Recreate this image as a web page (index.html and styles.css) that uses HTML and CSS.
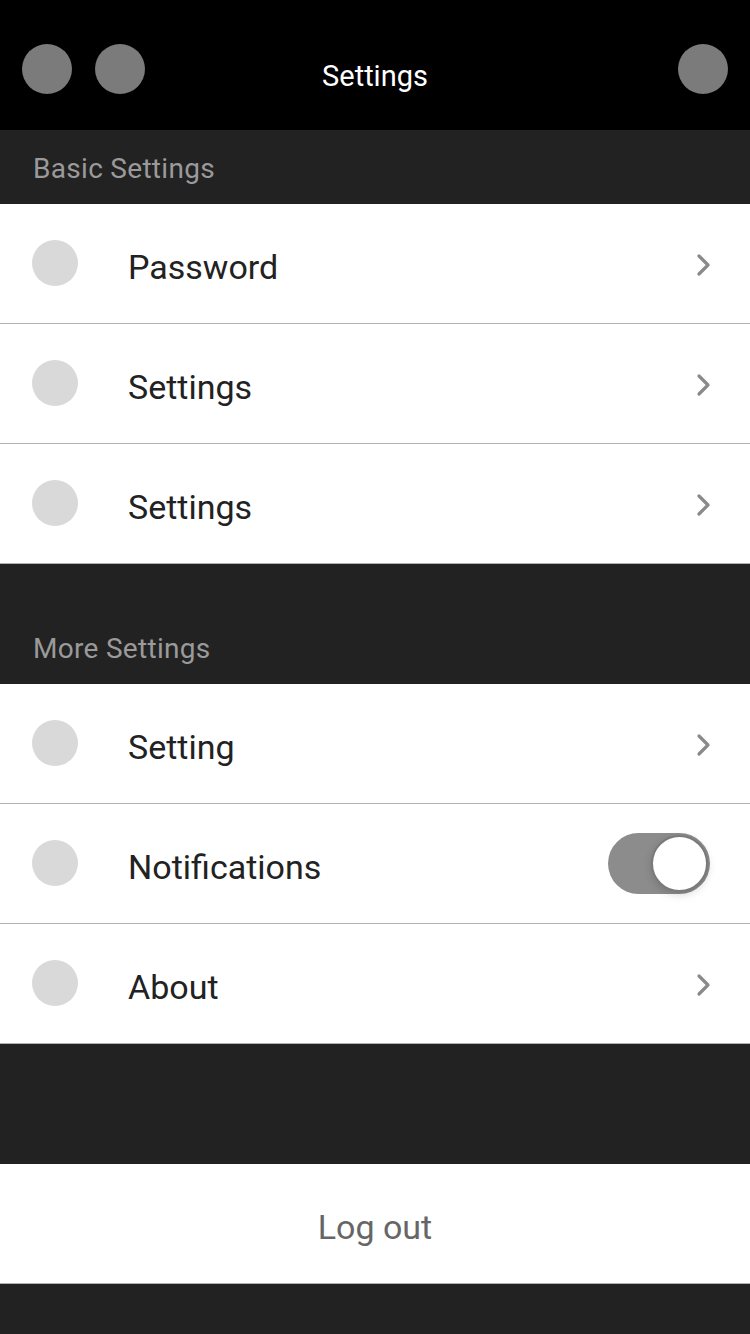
FILE: index.html
```html
<!DOCTYPE html>
<html>
<head>
<meta charset="utf-8">
<link rel="stylesheet" href="styles.css">
</head>
<body>
<div class="screen">
  <header class="topbar">
    <div class="topbar-left">
      <span class="nav-dot"></span>
      <span class="nav-dot"></span>
    </div>
    <div class="topbar-title">Settings</div>
    <div class="topbar-right">
      <span class="nav-dot"></span>
    </div>
  </header>

  <div class="section-head short">Basic Settings</div>
  <ul class="list">
    <li class="row"><span class="row-icon"></span><span class="row-label">Password</span><svg class="chev" viewBox="0 0 16 24"><path d="M3 3 L12 12 L3 21" /></svg></li>
    <li class="row"><span class="row-icon"></span><span class="row-label">Settings</span><svg class="chev" viewBox="0 0 16 24"><path d="M3 3 L12 12 L3 21" /></svg></li>
    <li class="row"><span class="row-icon"></span><span class="row-label">Settings</span><svg class="chev" viewBox="0 0 16 24"><path d="M3 3 L12 12 L3 21" /></svg></li>
  </ul>

  <div class="section-head tall">More Settings</div>
  <ul class="list">
    <li class="row"><span class="row-icon"></span><span class="row-label">Setting</span><svg class="chev" viewBox="0 0 16 24"><path d="M3 3 L12 12 L3 21" /></svg></li>
    <li class="row"><span class="row-icon"></span><span class="row-label">Notifications</span><span class="toggle"><span class="knob"></span></span></li>
    <li class="row"><span class="row-icon"></span><span class="row-label">About</span><svg class="chev" viewBox="0 0 16 24"><path d="M3 3 L12 12 L3 21" /></svg></li>
  </ul>

  <div class="spacer"></div>
  <div class="logout">Log out</div>
  <div class="bottom"></div>
</div>
</body>
</html>
```

FILE: styles.css
```css
* { box-sizing: border-box; }
html, body {
  margin: 0;
  padding: 0;
  background: #222222;
}
body {
  font-family: Roboto, "Liberation Sans", sans-serif;
}
.screen {
  width: 750px;
  height: 1334px;
  display: flex;
  flex-direction: column;
  background: #222222;
  overflow: hidden;
}
.topbar {
  height: 130px;
  background: #000000;
  display: flex;
  align-items: center;
  justify-content: space-between;
  padding: 0 22px 0 22px;
  position: relative;
}
.topbar-left, .topbar-right {
  display: flex;
  gap: 23px;
  margin-top: 8px;
}
.nav-dot {
  width: 50px;
  height: 50px;
  border-radius: 50%;
  background: #7b7b7b;
  display: block;
}
.topbar-title {
  position: absolute;
  left: 0;
  right: 0;
  top: 56px;
  text-align: center;
  color: #ffffff;
  font-size: 29px;
  line-height: 40px;
}
.section-head {
  background: #222222;
  color: #9a9a9a;
  font-size: 28px;
  letter-spacing: 0.3px;
  display: flex;
  align-items: flex-end;
  padding: 0 33px 19px;
  line-height: 32px;
}
.section-head.short { height: 74px; }
.section-head.tall { height: 120px; }
.list {
  list-style: none;
  margin: 0;
  padding: 0;
  background: #ffffff;
}
.row {
  height: 120px;
  display: flex;
  align-items: center;
  padding: 0 36px 0 32px;
  border-bottom: 1px solid #b3b3b3;
  background: #ffffff;
}
.row-icon {
  width: 46px;
  height: 46px;
  border-radius: 50%;
  background: #d9d9d9;
  flex: none;
  margin-top: -2px;
}
.row-label {
  flex: 1;
  margin-left: 50px;
  margin-top: 6px;
  font-size: 34px;
  color: #222222;
  line-height: 40px;
}
.chev {
  width: 16px;
  height: 24px;
  fill: none;
  stroke: #8a8a8a;
  stroke-width: 3.2;
  stroke-linecap: round;
  stroke-linejoin: round;
  margin-right: 2px;
  margin-top: 2px;
}
.toggle {
  width: 102px;
  height: 61px;
  border-radius: 31px;
  background: #8c8c8c;
  position: relative;
  margin-right: 4px;
  flex: none;
}
.knob {
  position: absolute;
  right: 2px;
  top: 2px;
  width: 57px;
  height: 57px;
  border-radius: 50%;
  background: #ffffff;
  border: 2px solid #7a7a7a;
  box-shadow: 0 3px 8px rgba(0,0,0,0.15);
}
.spacer {
  height: 120px;
  background: #222222;
}
.logout {
  height: 120px;
  background: #ffffff;
  display: flex;
  align-items: center;
  justify-content: center;
  color: #666666;
  font-size: 34px;
  padding-top: 6px;
  border-bottom: 1px solid #b3b3b3;
}
.bottom {
  flex: 1;
  background: #222222;
}
```
